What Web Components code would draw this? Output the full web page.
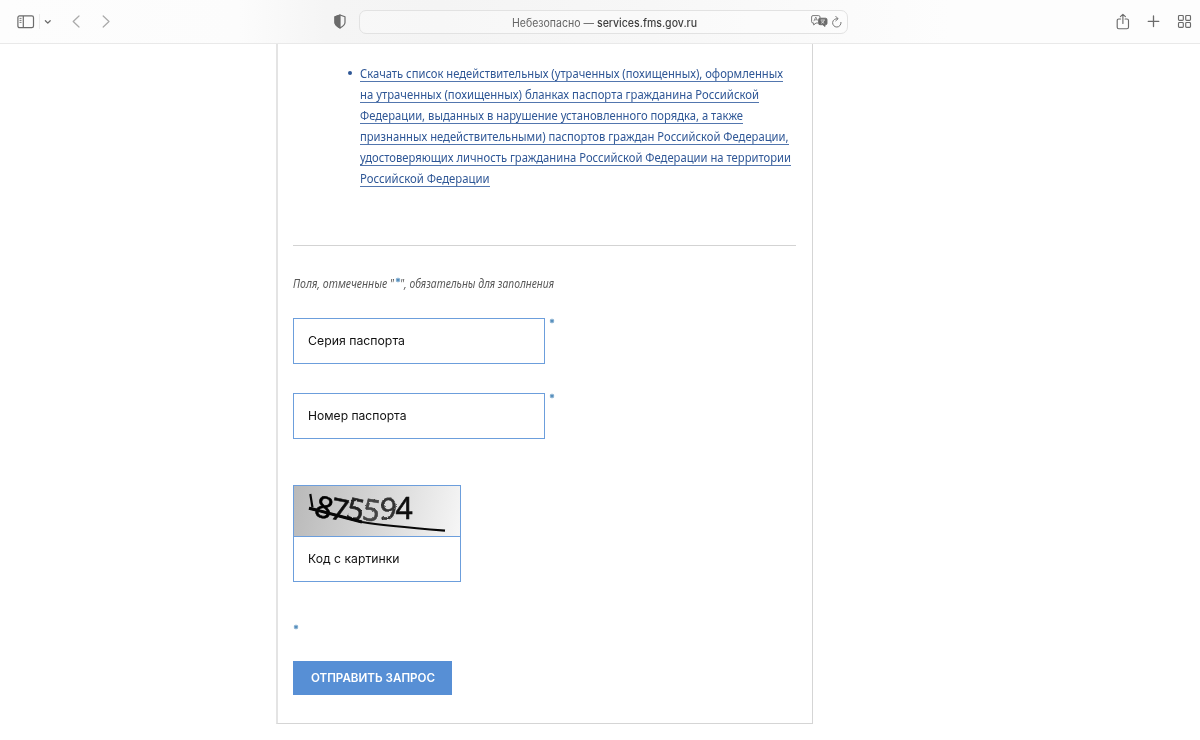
<!DOCTYPE html>
<html lang="ru">
<head>
<meta charset="utf-8">
<title>Проверка паспорта</title>
<style>
html,body{margin:0;height:100%;overflow:hidden;background:#fff}
body{font-family:"Noto Sans","Liberation Sans",sans-serif}
</style>
</head>
<body>
<passport-page></passport-page>

<template id="t-fit">
<style>
:host{display:block;white-space:nowrap;box-sizing:border-box}
span{display:inline-block;transform-origin:0 50%}
</style><span><slot></slot></span>
</template>

<template id="t-bar">
<style>
:host{display:flex;box-sizing:border-box;height:44px;border-bottom:1px solid #e9e9e9;align-items:center;
background:linear-gradient(90deg,#fdfdfd 0,#fcfcfc 240px,#f5f5f5 325px,#f4f4f4 440px,#f7f7f7 650px,#fbfbfb 850px,#fdfdfd 950px);color:#6b6b6b}
svg{display:block;fill:none;stroke:currentColor;flex:none}
.left{display:flex;align-items:center;width:333px;flex:none}
.address{box-sizing:border-box;width:489px;height:24px;border:1px solid #e2e2e2;border-radius:7px;margin-left:12px;display:flex;align-items:center;background:#ffffff55}
.address fit-text{margin-left:152px;margin-top:2px;font:11.1px/22px Inter,sans-serif;width:185px;color:#666}
.address b{font-weight:450;color:#3f3f3f}
.right{display:flex;align-items:center;margin-left:auto;padding-right:8px}
</style>
<div class="left">
<svg style="margin-left:17px" width="18" height="14" viewBox="0 0 18 14" stroke-width="1.2"><rect x=".9" y=".9" width="15.6" height="11.8" rx="1.7"/><path d="M6.3 1v11.6"/><path d="M2.5 3.4h2M2.5 5.4h2M2.5 7.4h2" stroke-width=".9"/></svg>
<svg style="margin-left:4px;color:#ebebeb" width="1" height="15" viewBox="0 0 1 15"><path d="M.5 0v15"/></svg>
<svg style="margin-left:4px" width="8" height="6" viewBox="0 0 8 6" stroke-width="1.3" stroke-linecap="round" stroke-linejoin="round"><path d="m1.4 1.7 2.4 2.4 2.4-2.4"/></svg>
<svg style="margin-left:20px;color:#aaa" width="9" height="13" viewBox="0 0 9 13" stroke-width="1.25" stroke-linecap="round" stroke-linejoin="round"><path d="M7 1 1.2 6.5 7 12"/></svg>
<svg style="margin-left:21px;color:#aaa" width="9" height="13" viewBox="0 0 9 13" stroke-width="1.25" stroke-linecap="round" stroke-linejoin="round"><path d="m1.2 1 5.8 5.5L1.2 12"/></svg>
</div>
<svg width="14" height="15" viewBox="0 0 14 15" stroke-width="1.2" stroke-linejoin="round"><path d="M7 1 12 2.8v5.7c0 2.2-2 3.9-5 5.4-3-1.5-5-3.2-5-5.4V2.8Z"/><path d="M7 1v12.9c-3-1.5-5-3.2-5-5.4V2.8Z" fill="currentColor"/></svg>
<div class="address">
<fit-text data-w="185">Небезопасно — <b>services.fms.gov.ru</b></fit-text>
<svg style="margin-left:114px;margin-top:-1px" width="17" height="12" viewBox="0 0 17 12" stroke-width=".9"><path d="M7.2 8H5L2.7 10V8H2Q.6 8 .6 6.6V2Q.6.6 2 .6h5.6Q9 .6 9 2v1"/><path d="m2.8 6.2 2-4.2 1.7 3.5M3.5 4.8h2.6" stroke-width=".7"/><path d="M9 3.2h5.5Q16 3.2 16 4.6v3.8q0 1.3-1.5 1.3H14v1.8l-2.2-1.8H9Q7.6 9.7 7.6 8.4V4.6Q7.6 3.2 9 3.2Z" fill="currentColor"/><path d="M9.7 5h4.2M10.2 8.3c1.4-.5 2.5-1.7 2.9-3M10.4 5.7c.5 1.2 1.5 2.1 2.8 2.6" style="stroke:#eee" stroke-width=".8"/></svg>
<svg style="margin-left:3px;color:#777" width="12" height="14" viewBox="0 0 12 14" stroke-width="1" stroke-linecap="round"><path d="M6.6 3.7A4.2 4.2 0 1 0 10 7.4M4.8 1.4l2.3 2.3-2.3 2.1" stroke-linejoin="round"/></svg>
</div>
<div class="right">
<svg width="14" height="18" viewBox="0 0 14 18" stroke-width="1.15" stroke-linecap="round" stroke-linejoin="round"><path d="M4.6 6H2.8Q1.2 6 1.2 7.5v6.7q0 1.5 1.6 1.5h8.1q1.6 0 1.6-1.5V7.5Q12.5 6 10.9 6H9.1M6.9 10.5V1.3M4.4 3.7l2.5-2.4 2.5 2.4"/></svg>
<svg style="margin-left:17px" width="13" height="13" viewBox="0 0 13 13" stroke-width="1.3" stroke-linecap="round"><path d="M6.5 1v10.6M1.2 6.3h10.6"/></svg>
<svg style="margin-left:17px" width="15" height="15" viewBox="0 0 15 15" stroke-width="1.15"><rect x="1.5" y="1.5" width="4.8" height="4.8" rx=".9"/><rect x="8.7" y="1.5" width="4.8" height="4.8" rx=".9"/><rect x="1.5" y="8.5" width="4.8" height="4.8" rx=".9"/><rect x="8.7" y="8.5" width="4.8" height="4.8" rx=".9"/></svg>
</div>
</template>

<template id="t-link">
<style>
:host{display:grid;grid-template-columns:12px auto;color:#2f5796;font:12.2px/21px "Noto Sans",sans-serif}
i{width:4.6px;height:4.6px;border-radius:50%;background:currentColor;margin:4.5px 0 0 -.5px}
a{color:inherit;display:block;cursor:pointer}
fit-text{height:16px;line-height:16px;border-bottom:1px solid #5276ae;margin-bottom:5px}
</style>
<i></i><a>
<fit-text data-w="423">Скачать список недействительных (утраченных (похищенных), оформленных</fit-text>
<fit-text data-w="399">на утраченных (похищенных) бланках паспорта гражданина Российской</fit-text>
<fit-text data-w="383">Федерации, выданных в нарушение установленного порядка, а также</fit-text>
<fit-text data-w="428.5">признанных недействительными) паспортов граждан Российской Федерации,</fit-text>
<fit-text data-w="431">удостоверяющих личность гражданина Российской Федерации на территории</fit-text>
<fit-text data-w="129.5">Российской Федерации</fit-text>
</a>
</template>

<template id="t-star">
<style>
:host{display:block;width:6px;height:6px;color:#568fbd}
svg{display:block;fill:none;stroke:currentColor;stroke-width:1.1}
</style>
<svg width="6" height="6" viewBox="0 0 6 6"><path d="M3 .7v4.6M1 1.8l4 2.4M1 4.2l4-2.4"/></svg>
</template>

<template id="t-field">
<style>
:host{display:flex;gap:4px}
.box{box-sizing:border-box;width:252px;height:46px;border:1px solid #6c9edc;padding-left:14.4px;font:11.7px/44px Inter,sans-serif;color:#111;background:#fff}
</style>
<div class="box"><slot></slot></div><required-star></required-star>
</template>

<template id="t-captcha">
<style>
:host{display:block;box-sizing:border-box;width:168px;height:97px;border:1px solid #6c9edc}
.pic{height:50px;border-bottom:1px solid #6c9edc;background:linear-gradient(102deg,#b9b9b9,#d2d2d2 43%,#f6f6f6)}
svg{display:block}
.box{padding-left:14.4px;font:11.7px/44px Inter,sans-serif;color:#111}
</style>
<div class="pic"><svg width="166" height="50" viewBox="0 0 166 50">
<defs><filter id="rough" x="-10%" y="-20%" width="120%" height="140%"><feTurbulence type="fractalNoise" baseFrequency=".45" numOctaves="2" seed="4"/><feDisplacementMap in="SourceGraphic" scale="2.2" xChannelSelector="R" yChannelSelector="G"/><feGaussianBlur stdDeviation=".5"/></filter>
<filter id="soft"><feGaussianBlur stdDeviation=".35"/></filter></defs>
<g font-family="Noto Sans,sans-serif" font-size="30" fill="#222" stroke="#222" stroke-width=".6">
<g filter="url(#soft)"><text x="21.500" y="32" fill="#050505" stroke="#050505" transform="rotate(16 30 22)">8</text>
<text x="37" y="34" fill="#111" stroke="#111" transform="rotate(12 44 24)">7</text>
<text x="101.500" y="32.500" fill="#0b0b0b" stroke="#0b0b0b">4</text></g>
<g filter="url(#rough)"><text x="53" y="34" transform="rotate(12 62 24)">5</text><text x="69" y="35" fill="#444" stroke="#444" transform="rotate(10 78 24)">5</text><text x="85.500" y="33.5" fill="#333" stroke="#333" transform="rotate(5 94 24)">9</text></g></g>
<path d="m16.3 8 2.2 13.5M15 22.3C31 26 48 31 68 36c18 3 47 5.700 83 8.700" fill="none" stroke="#080808" stroke-width="2.2"/>
<path d="M15 22.3C31 26 48 31 68 36" fill="none" stroke="#080808" stroke-width="3"/>
</svg></div><div class="box"><slot></slot></div>
</template>

<template id="t-page">
<style>
:host{display:block;width:1200px;height:740px;background:#fff}
main{box-sizing:border-box;width:537px;height:680px;margin-left:276px;border:1px solid #d5d5d5;border-top:0;border-left:2px solid #e4e4e4;padding:22px 16px 0 15px}
download-link{margin-left:55px}
hr{border:0;height:1px;background:#d3d3d3;margin:53px 0 0}
.note{display:flex;height:18px;margin-top:29px;font:italic 12px/18px "Noto Sans",sans-serif;color:#595959}
.note required-star{margin:2px 0 0 1px}
.field1{margin-top:25px}.field2{margin-top:29px}captcha-field{margin-top:46px}
.star{margin-top:42px}
button{display:block;box-sizing:border-box;border:0;width:159px;height:34px;margin-top:31px;padding:0 0 0 17.5px;background:#578fd5;color:#fff;font:600 11.6px/34px Inter,sans-serif;text-align:left}
</style>
<browser-bar></browser-bar>
<main>
<download-link></download-link>
<hr>
<div class="note"><fit-text data-w="101">Поля, отмеченные "</fit-text><required-star></required-star><fit-text data-w="154" style="margin-left:-1px">", обязательны для заполнения</fit-text></div>
<text-field class="field1"><fit-text data-w="97">Серия паспорта</fit-text></text-field>
<text-field class="field2"><fit-text data-w="98.5">Номер паспорта</fit-text></text-field>
<captcha-field><fit-text data-w="91.5">Код с картинки</fit-text></captcha-field>
<required-star class="star"></required-star>
<button type="button"><fit-text data-w="124">ОТПРАВИТЬ ЗАПРОС</fit-text></button>
</main>
</template>

<script>
class Base extends HTMLElement{
  constructor(){
    super();
    this.attachShadow({mode:"open"}).append(document.getElementById(this.constructor.tpl).content.cloneNode(true));
  }
}
class FitText extends Base{
  static tpl="t-fit";
  connectedCallback(){
    this.style.width=this.dataset.w+"px";
    requestAnimationFrame(()=>this.fit());
  }
  fit(){
    const s=this.shadowRoot.querySelector("span");
    if(s.offsetWidth) s.style.transform="scaleX("+(this.dataset.w/s.getBoundingClientRect().width)+")";
  }
}
class BrowserBar extends Base{static tpl="t-bar"}
class DownloadLink extends Base{static tpl="t-link"}
class RequiredStar extends Base{static tpl="t-star"}
class TextField extends Base{static tpl="t-field"}
class CaptchaField extends Base{static tpl="t-captcha"}
class PassportPage extends Base{static tpl="t-page"}
customElements.define("fit-text",FitText);
customElements.define("required-star",RequiredStar);
customElements.define("browser-bar",BrowserBar);
customElements.define("download-link",DownloadLink);
customElements.define("text-field",TextField);
customElements.define("captcha-field",CaptchaField);
customElements.define("passport-page",PassportPage);
</script>
</body>
</html>
